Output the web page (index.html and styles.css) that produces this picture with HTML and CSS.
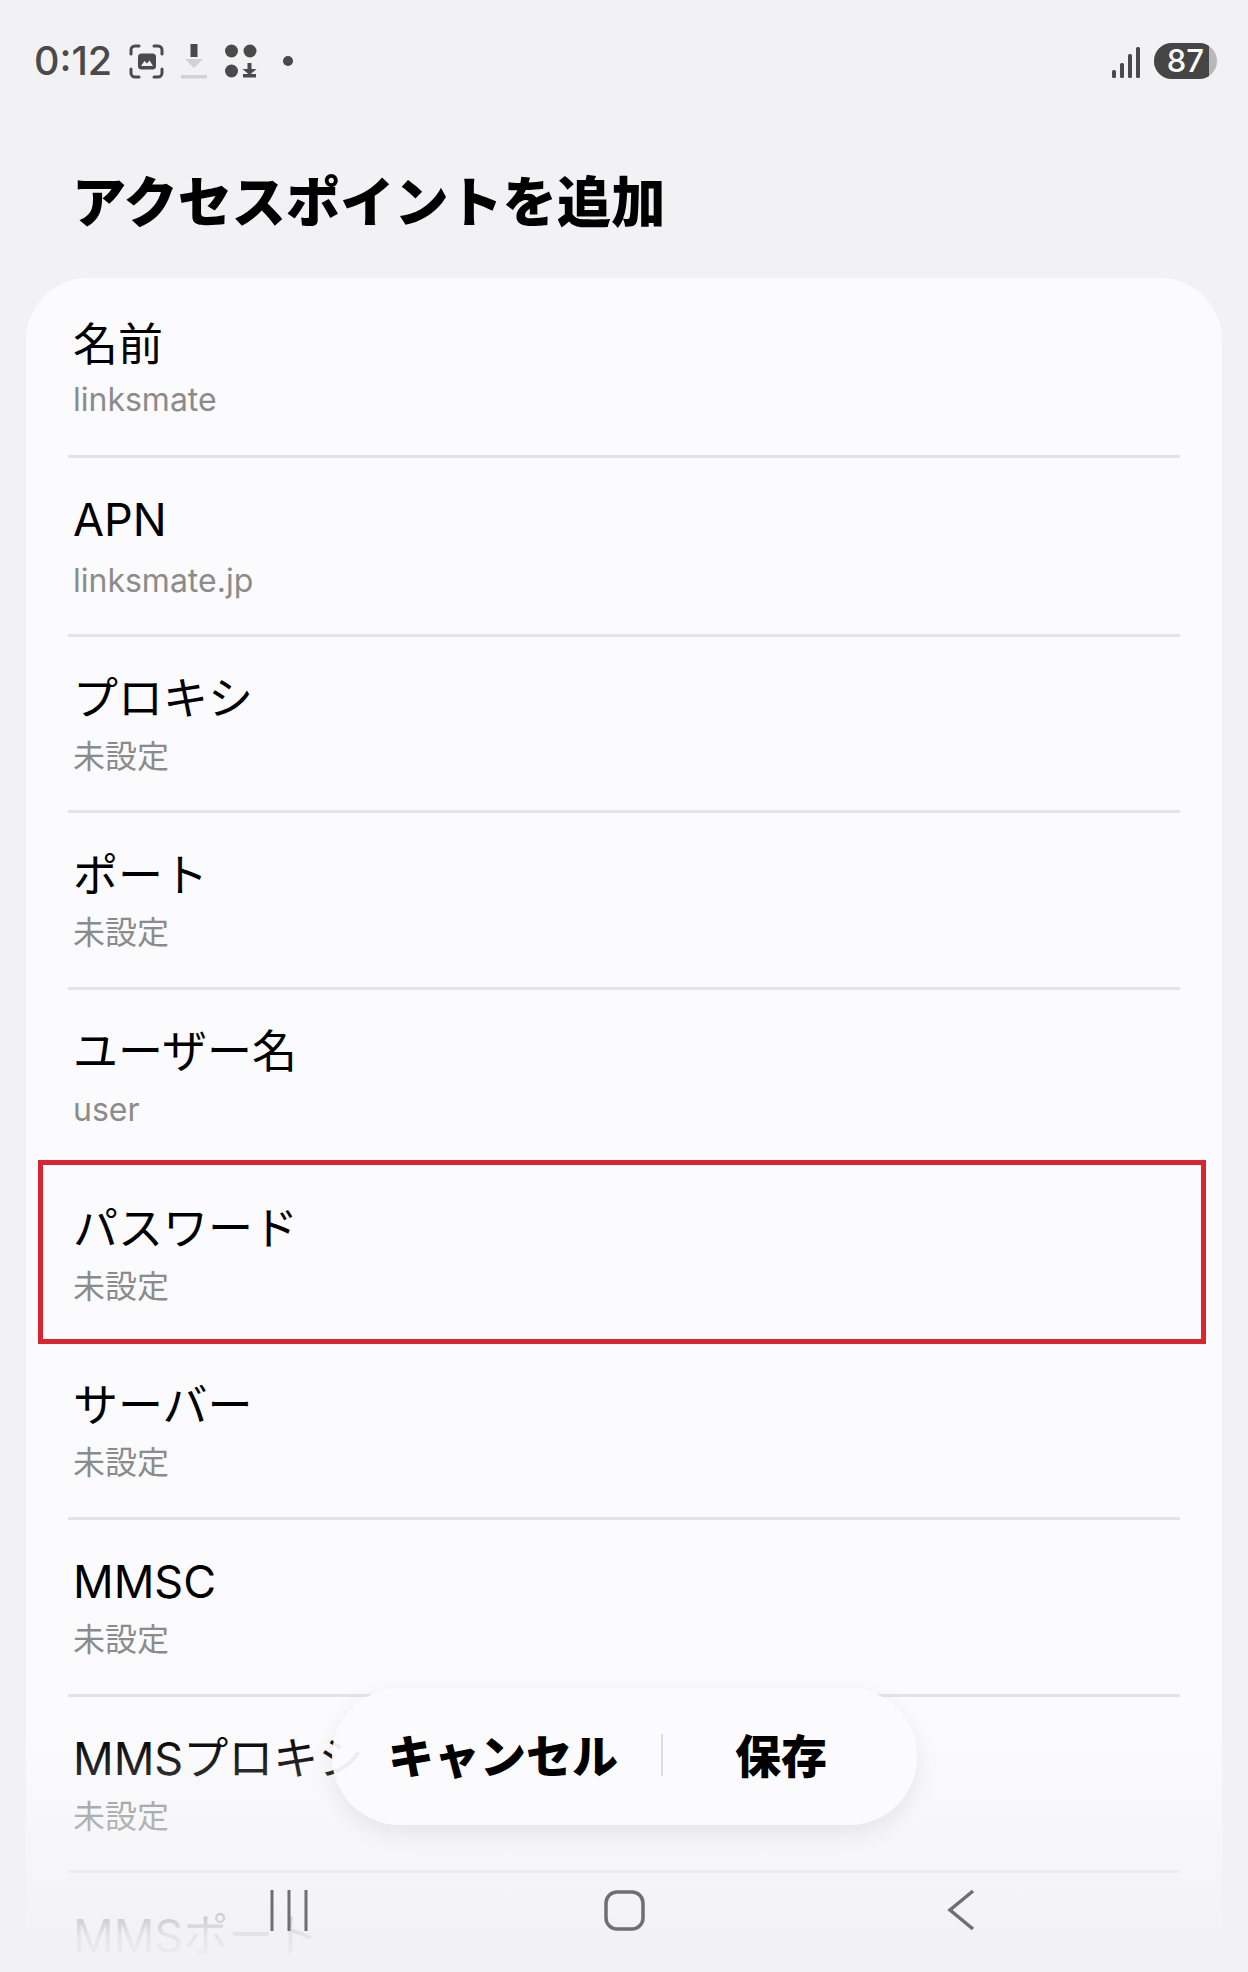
FILE: index.html
```html
<!DOCTYPE html>
<html lang="ja">
<head>
<meta charset="utf-8">
<title>アクセスポイントを追加</title>
<link rel="stylesheet" href="styles.css">
</head>
<body>
<div class="screen">
  <header class="status">
    <div class="status-left">
      <span class="clock">0:12</span>
      <svg class="ic ic-shot" viewBox="0 0 35 35"><path d="M2 10V6a4 4 0 0 1 4-4h4M25 2h4a4 4 0 0 1 4 4v4M33 25v4a4 4 0 0 1-4 4h-4M10 33H6a4 4 0 0 1-4-4v-4" fill="none" stroke="#4a4a4a" stroke-width="3" stroke-linecap="round"/><rect x="9" y="9.500" width="18" height="16" rx="3.5" fill="#4a4a4a"/><path d="M12 22l3.500-5 2.500 2.500 2.500-3 3.500 5.500z" fill="#f2f2f4"/></svg>
      <svg class="ic ic-dl" viewBox="0 0 26 35"><rect x="9.500" width="7" height="13" fill="#4a4a4a"/><path d="M4 15h18l-9 9z" fill="#d2d2d4"/><rect y="31" width="26" height="3.500" fill="#d2d2d4"/></svg>
      <svg class="ic ic-grp" viewBox="0 0 32 34"><circle cx="6.500" cy="7" r="6.500" fill="#4a4a4a"/><circle cx="25" cy="7" r="6.500" fill="#4a4a4a"/><circle cx="6.500" cy="27" r="6.500" fill="#4a4a4a"/><path d="M22.500 19h4v6h5l-7 6-7-6h5z" fill="#4a4a4a"/><rect x="18" y="30" width="13" height="3.500" fill="#4a4a4a"/></svg>
      <span class="dot"></span>
    </div>
    <div class="status-right">
      <svg class="ic ic-sig" viewBox="0 0 28 31"><rect y="23" width="4" height="8" rx="1.500"/><rect x="8" y="16" width="4" height="15" rx="1.500"/><rect x="16" y="7" width="4" height="24" rx="1.500"/><rect x="24" width="4" height="31" rx="1.500"/></svg>
      <div class="batt"><span class="batt-fill">87</span></div>
    </div>
  </header>

  <h1 class="title">アクセスポイントを追加</h1>

  <main class="card">
    <div class="row row-first"><div class="name">名前</div><div class="val">linksmate</div></div>
    <div class="row row-apn"><div class="name">APN</div><div class="val">linksmate.jp</div></div>
    <div class="row"><div class="name">プロキシ</div><div class="val">未設定</div></div>
    <div class="row"><div class="name">ポート</div><div class="val">未設定</div></div>
    <div class="row row-before-mark"><div class="name">ユーザー名</div><div class="val">user</div></div>
    <div class="row row-marked"><div class="name">パスワード</div><div class="val">未設定</div></div>
    <div class="row"><div class="name">サーバー</div><div class="val">未設定</div></div>
    <div class="row"><div class="name">MMSC</div><div class="val">未設定</div></div>
    <div class="row"><div class="name">MMSプロキシ</div><div class="val">未設定</div></div>
    <div class="row"><div class="name">MMSポート</div></div>
  </main>

  <div class="fade"></div>

  <div class="pill">
    <span class="pill-btn pill-cancel">キャンセル</span>
    <span class="pill-sep"></span>
    <span class="pill-btn pill-save">保存</span>
  </div>

  <nav class="navbar">
    <svg class="nav-ic nav-recent" viewBox="0 0 38 41"><path d="M2 0v41M19 0v41M36 0v41" fill="none" stroke="#6f6f71" stroke-width="3"/></svg>
    <svg class="nav-ic nav-home" viewBox="0 0 41 41"><rect x="2" y="2" width="37" height="37" rx="11" fill="none" stroke="#6f6f71" stroke-width="3.500"/></svg>
    <svg class="nav-ic nav-back" viewBox="0 0 28 42"><path d="M26 2L3 21l23 19" fill="none" stroke="#6f6f71" stroke-width="3.500"/></svg>
  </nav>
</div>
</body>
</html>
```
FILE: styles.css
```css
* { box-sizing: border-box; }
html, body { margin: 0; padding: 0; }
body {
  width: 1248px;
  height: 1972px;
  overflow: hidden;
  background: #f2f2f4;
  font-family: "Inter", "Noto Sans CJK JP", sans-serif;
  color: #000;
}
.screen { position: relative; width: 1248px; height: 1972px; overflow: hidden; }

.status {
  display: flex;
  justify-content: space-between;
  align-items: center;
  height: 122px;
  padding: 0 31px 0 34px;
  color: #4a4a4a;
}
.status-left { display: flex; align-items: center; }
.status-right { display: flex; align-items: center; }
.clock { font-size: 39.500px; font-weight: 500; line-height: 40px; width: 95px; }
.ic { display: block; }
.ic-shot { width: 35px; height: 35px; margin-right: 17px; }
.ic-dl { width: 26px; height: 35px; margin-right: 18px; }
.ic-grp { width: 32px; height: 34px; margin-right: 26px; }
.dot { width: 10px; height: 10px; border-radius: 50%; background: #4a4a4a; }
.ic-sig { width: 28px; height: 31px; fill: #4a4a4a; margin: 2px 14px 0 0; }
.batt { width: 63px; height: 36px; border-radius: 18px; background: #b8b8b9; overflow: hidden; }
.batt-fill {
  display: block;
  width: 55px;
  height: 36px;
  background: #454545;
  color: #fff;
  font-size: 31px;
  font-weight: 500;
  line-height: 36px;
  text-align: right;
  padding-right: 5px;
}

.title {
  margin: 0;
  height: 156px;
  padding: 45px 0 0 72px;
  font-size: 54.200px;
  line-height: 64px;
  font-weight: 900;
  font-family: "Noto Sans CJK JP", sans-serif;
}

.card {
  margin: 0 26.500px 0 26px;
  background: #fbfbfd;
  border-radius: 62px 62px 0 0;
  padding: 0 42px;
}
.row {
  position: relative;
  height: 176.700px;
  padding: 33.500px 0 0 5px;
  border-bottom: 3px solid #e4e4e6;
}
.row-first { height: 179.500px; padding-top: 37.500px; }
.row-apn { height: 179px; }
.row-before-mark { border-bottom-color: transparent; }
.name {
  font-size: 45px;
  line-height: 57px;
}
.val {
  margin-top: 7.500px;
  font-size: 32px;
  line-height: 44px;
  color: #8b8b8b;
}
.row-first .val { margin-top: 5.500px; }
.row-apn .val { margin-top: 10.500px; }
.row-marked::after {
  content: "";
  position: absolute;
  left: -30px;
  right: -26px;
  top: -7px;
  bottom: -4px;
  border: 5px solid #d9252f;
}

.fade {
  position: absolute;
  left: 0;
  right: 0;
  top: 1730px;
  bottom: 0;
  background: linear-gradient(to bottom, rgba(242,242,244,0) 0%, rgba(242,242,244,.55) 55%, rgba(242,242,244,.95) 85%, #f2f2f4 100%);
}

.pill {
  position: absolute;
  left: 332px;
  top: 1688px;
  width: 585px;
  height: 137px;
  border-radius: 68px;
  background: rgba(251,251,253,.94);
  box-shadow: 0 8px 24px rgba(0,0,0,.08);
  font-family: "Noto Sans CJK JP", sans-serif;
  display: flex;
  align-items: center;
}
.pill-btn { font-size: 46px; font-weight: 900; line-height: 60px; margin-top: -7px; }
.pill-cancel { margin-left: 56px; width: 273px; }
.pill-sep { width: 2px; height: 42px; background: #dcdcde; margin-top: -4px; }
.pill-save { margin-left: 72px; }

.navbar {
  position: absolute;
  left: 0;
  right: 0;
  top: 1889px;
  height: 42px;
  display: flex;
  align-items: center;
  padding-left: 270px;
}
.nav-ic { display: block; }
.nav-recent { width: 38px; height: 41px; margin-right: 296px; }
.nav-home { width: 41px; height: 41px; margin-right: 302px; }
.nav-back { width: 28px; height: 42px; }
```
